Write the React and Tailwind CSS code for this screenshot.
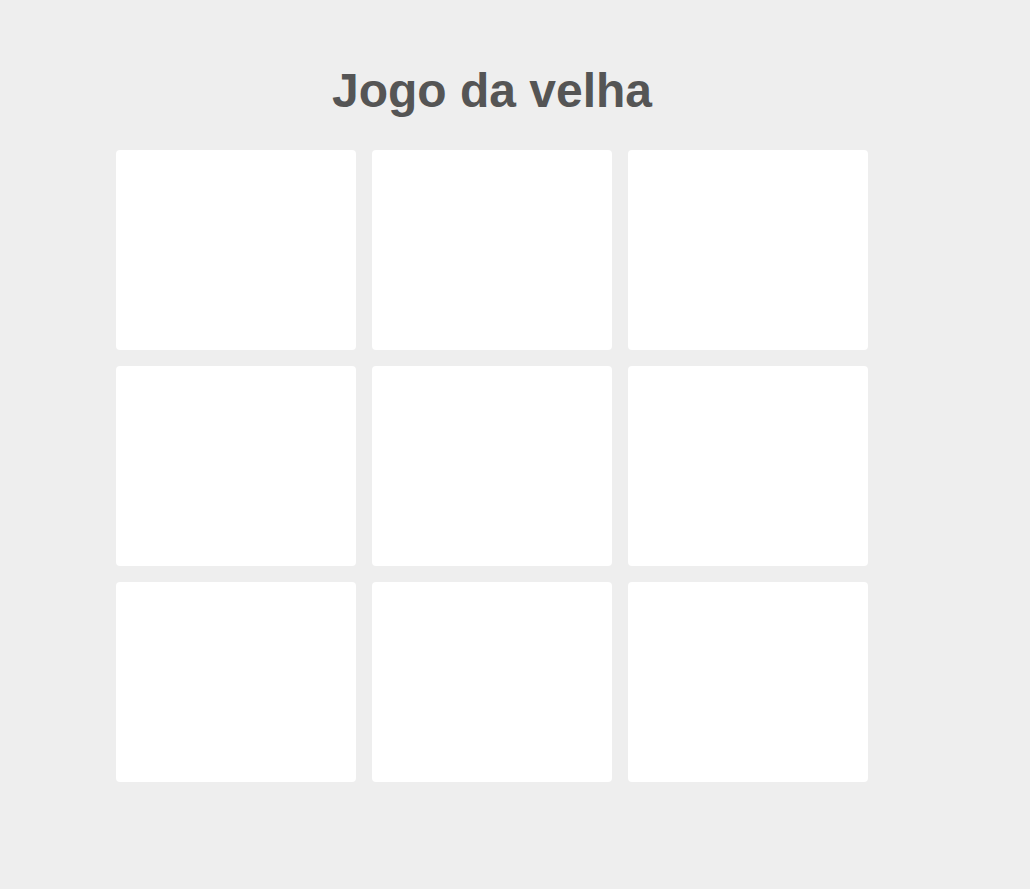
const App = () => {
  const cells = Array.from({ length: 9 });
  return (
    <div className="min-h-screen w-full bg-[#eeeeee] pt-[67px]" style={{ fontFamily: '"Liberation Sans", Arial, sans-serif' }}>
      <div className="ml-[116px] w-[752px]">
        <h1 className="text-center text-[48px] font-bold leading-none text-[#555555] mb-[35px]">Jogo da velha</h1>
        <div className="grid grid-cols-[repeat(3,240px)] grid-rows-[repeat(3,200px)] gap-4">
          {cells.map((_, i) => (
            <div key={i} className="rounded bg-white" />
          ))}
        </div>
      </div>
    </div>
  );
};

export default App;
